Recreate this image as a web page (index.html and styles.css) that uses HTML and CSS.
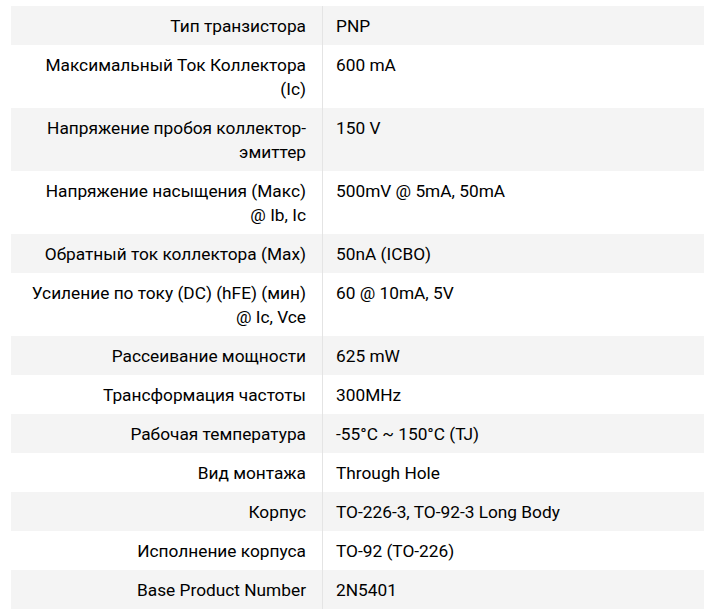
FILE: index.html
```
<!DOCTYPE html>
<html lang="ru">
<head>
<meta charset="utf-8">
<link rel="stylesheet" href="styles.css">
</head>
<body>
<table class="specs">
<tbody>
<tr><th>Тип транзистора</th><td>PNP</td></tr>
<tr><th>Максимальный Ток Коллектора (Ic)</th><td>600 mA</td></tr>
<tr><th>Напряжение пробоя коллектор-эмиттер</th><td>150 V</td></tr>
<tr><th>Напряжение насыщения (Макс) @&nbsp;Ib, Ic</th><td>500mV @ 5mA, 50mA</td></tr>
<tr><th>Обратный ток коллектора (Max)</th><td>50nA (ICBO)</td></tr>
<tr><th>Усиление по току (DC) (hFE) (мин) @&nbsp;Ic, Vce</th><td>60 @ 10mA, 5V</td></tr>
<tr><th>Рассеивание мощности</th><td>625 mW</td></tr>
<tr><th>Трансформация частоты</th><td>300MHz</td></tr>
<tr><th>Рабочая температура</th><td>-55°C ~ 150°C (TJ)</td></tr>
<tr><th>Вид монтажа</th><td>Through Hole</td></tr>
<tr><th>Корпус</th><td>TO-226-3, TO-92-3 Long Body</td></tr>
<tr><th>Исполнение корпуса</th><td>TO-92 (TO-226)</td></tr>
<tr><th>Base Product Number</th><td>2N5401</td></tr>
</tbody>
</table>
</body>
</html>
```
FILE: styles.css
```
html, body {
  margin: 0;
  padding: 0;
  background: #ffffff;
}
body {
  padding: 6px 0 0 11px;
  font-family: Roboto, "Noto Sans", sans-serif;
  font-size: 17.3px;
  line-height: 24px;
  color: #000000;
}
.specs {
  border-collapse: collapse;
  width: 693px;
  table-layout: fixed;
}
.specs tr:nth-child(odd) {
  background: #f4f4f4;
}
.specs th,
.specs td {
  padding: 7.5px 0;
  vertical-align: top;
  font-weight: 400;
}
.specs th {
  width: 279px;
  padding-left: 16px;
  padding-right: 16px;
  text-align: right;
  border-right: 1px solid #e4e4e4;
}
.specs td {
  padding-left: 13px;
  text-align: left;
}
```
